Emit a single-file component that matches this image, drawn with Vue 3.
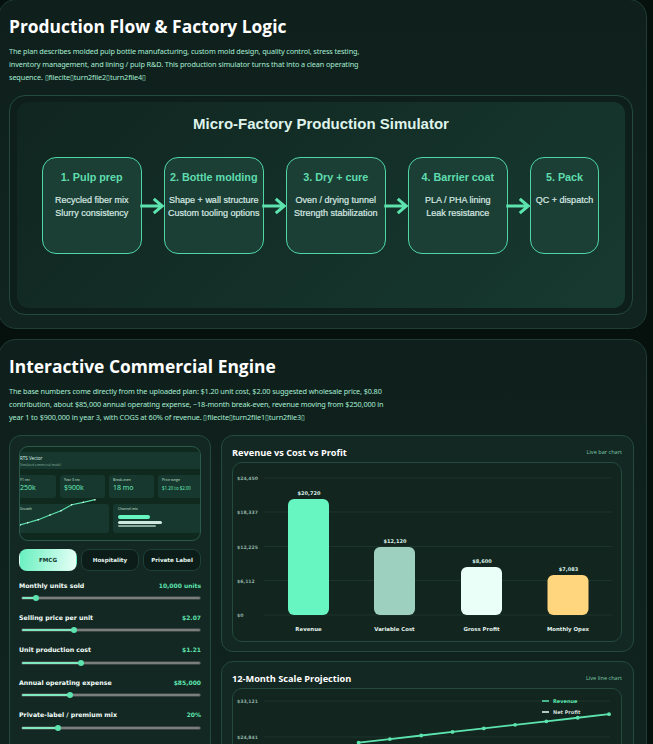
<script setup>
const steps = [
  { title: '1. Pulp prep', lines: ['Recycled fiber mix', 'Slurry consistency'] },
  { title: '2. Bottle molding', lines: ['Shape + wall structure', 'Custom tooling options'] },
  { title: '3. Dry + cure', lines: ['Oven / drying tunnel', 'Strength stabilization'] },
  { title: '4. Barrier coat', lines: ['PLA / PHA lining', 'Leak resistance'] },
  { title: '5. Pack', lines: ['QC + dispatch'], small: true }
]

const heroStats = [
  { label: 'Y1 rev', value: '250k', lead: true },
  { label: 'Year 3 rev', value: '$900k' },
  { label: 'Break-even', value: '18 mo' },
  { label: 'Price range', value: '$1.20 to $2.00', small: true }
]

const tabs = ['FMCG', 'Hospitality', 'Private Label']

const sliders = [
  { label: 'Monthly units sold', value: '10,000 units', pct: 7.6 },
  { label: 'Selling price per unit', value: '$2.07', pct: 29 },
  { label: 'Unit production cost', value: '$1.21', pct: 33 },
  { label: 'Annual operating expense', value: '$85,000', pct: 27.2 },
  { label: 'Private-label / premium mix', value: '20%', pct: 20.5 }
]

const barGrid = [
  { y: 16, label: '$24,450' },
  { y: 50, label: '$18,337' },
  { y: 84.5, label: '$12,225' },
  { y: 118.5, label: '$6,112' },
  { y: 153, label: '$0' }
]
const bars = [
  { x: 56, top: 37, label: 'Revenue', value: '$20,720', color: '#67f5c1' },
  { x: 142, top: 85, label: 'Variable Cost', value: '$12,120', color: '#9dd0bf' },
  { x: 229, top: 105, label: 'Gross Profit', value: '$8,600', color: '#eafff8' },
  { x: 315.5, top: 113, label: 'Monthly Opex', value: '$7,083', color: '#ffd67d' }
]

const lineGrid = [
  { y: 13, label: '$33,121' },
  { y: 49, label: '$24,841' }
]
const linePoints = Array.from({ length: 9 }, (_, i) => ({
  x: 377 - 31.3 * (8 - i),
  y: 26.2 + 3.55 * (8 - i)
}))
const linePath = linePoints.map(p => `${p.x},${p.y}`).join(' ')

const heroLine = [[9, 21], [16.7, 18.7], [27.3, 15.7], [39, 11], [50, 6.7], [60.7, 0.7], [72.3, -1.7], [84, -4.3]]
const heroPath = heroLine.map(p => p.join(',')).join(' ')
</script>

<template>
  <main class="page">
    <section class="panel flow-panel">
      <h2>Production Flow &amp; Factory Logic</h2>
      <p class="lead">
        The plan describes molded pulp bottle manufacturing, custom mold design, quality control, stress testing,<br />
        inventory management, and lining / pulp R&amp;D. This production simulator turns that into a clean operating<br />
        sequence. ▯filecite▯turn2file2▯turn2file4▯
      </p>
      <div class="sim-frame">
        <div class="sim">
          <h3>Micro-Factory Production Simulator</h3>
          <div class="flow">
            <template v-for="(s, i) in steps" :key="s.title">
              <div class="step" :class="{ 'step-small': s.small }">
                <h4>{{ s.title }}</h4>
                <div v-for="l in s.lines" :key="l" class="step-line">{{ l }}</div>
              </div>
              <svg v-if="i < steps.length - 1" class="arrow" width="22" height="18" viewBox="0 0 22 18">
                <path d="M-2 9H20M11.5 1.8L20 9L11.5 16.2" fill="none" stroke="#5ce3ae" stroke-width="3" />
              </svg>
            </template>
          </div>
        </div>
      </div>
    </section>

    <section class="panel engine-panel">
      <h2>Interactive Commercial Engine</h2>
      <p class="lead">
        The base numbers come directly from the uploaded plan: $1.20 unit cost, $2.00 suggested wholesale price, $0.80<br />
        contribution, about $85,000 annual operating expense, ~18-month break-even, revenue moving from $250,000 in<br />
        year 1 to $900,000 in year 3, with COGS at 60% of revenue. ▯filecite▯turn2file1▯turn2file3▯
      </p>

      <div class="engine">
        <aside class="card controls">
          <div class="hero">
            <div class="hero-head">
              <div class="hero-title">RTS Vector</div>
              <div class="hero-sub">Simulated commercial model</div>
            </div>
            <div class="hero-stats">
              <div v-for="s in heroStats" :key="s.label" class="hero-stat" :class="{ 'hero-stat-lead': s.lead }">
                <div class="hero-label">{{ s.label }}</div>
                <div class="hero-value" :class="{ 'hero-value-small': s.small }">{{ s.value }}</div>
              </div>
            </div>
            <div class="hero-lower">
              <div class="hero-box hero-line">
                <div class="hero-label">Growth</div>
                <svg class="hero-svg" width="98" height="29" viewBox="0 0 98 29">
                  <polyline :points="heroPath" fill="none" stroke="#5ce3ae" stroke-width="1.2" />
                  <circle v-for="(p, i) in heroLine" :key="i" :cx="p[0]" :cy="p[1]" r="0.8" fill="#eafff8" />
                </svg>
              </div>
              <div class="hero-box hero-bars">
                <div class="hero-label">Channel mix</div>
                <span class="hb hb1"></span>
                <span class="hb hb2"></span>
                <span class="hb hb3"></span>
              </div>
            </div>
          </div>

          <div class="tabs">
            <button v-for="(t, i) in tabs" :key="t" class="tab" :class="{ active: i === 0 }">{{ t }}</button>
          </div>

          <div class="sliders">
            <div v-for="s in sliders" :key="s.label" class="slider">
              <div class="slider-head">
                <span class="slider-label">{{ s.label }}</span>
                <span class="slider-value">{{ s.value }}</span>
              </div>
              <div class="track">
                <div class="fill" :style="{ width: s.pct + '%' }"></div>
                <div class="thumb" :style="{ left: s.pct + '%' }"></div>
              </div>
            </div>
          </div>
        </aside>

        <div class="charts">
          <article class="card chart-card">
            <header class="chart-head">
              <h5>Revenue vs Cost vs Profit</h5>
              <span>Live bar chart</span>
            </header>
            <div class="chart-box bar-box">
              <svg width="390" height="180" viewBox="0 0 390 180">
                <g v-for="g in barGrid" :key="g.label">
                  <line x1="32" x2="380" :y1="g.y" :y2="g.y" class="grid" />
                  <text x="5" :y="g.y + 2" class="axis">{{ g.label }}</text>
                </g>
                <g v-for="b in bars" :key="b.label">
                  <rect :x="b.x" :y="b.top" width="41" :height="153 - b.top" rx="6" :fill="b.color" />
                  <text :x="b.x + 21" :y="b.top - 4" text-anchor="middle" class="bar-value">{{ b.value }}</text>
                  <text :x="b.x + 20.5" y="169" text-anchor="middle" class="bar-label">{{ b.label }}</text>
                </g>
              </svg>
            </div>
          </article>

          <article class="card chart-card">
            <header class="chart-head">
              <h5>12-Month Scale Projection</h5>
              <span>Live line chart</span>
            </header>
            <div class="chart-box line-box">
              <svg width="390" height="180" viewBox="0 0 390 180">
                <g v-for="g in lineGrid" :key="g.label">
                  <line x1="32" x2="378" :y1="g.y" :y2="g.y" class="grid" />
                  <text x="5" :y="g.y + 2" class="axis">{{ g.label }}</text>
                </g>
                <polyline :points="linePath" fill="none" stroke="#5ce3ae" stroke-width="1.8" />
                <circle v-for="p in linePoints" :key="p.x" :cx="p.x" :cy="p.y" r="1.9" fill="#5ce3ae" />
                <line x1="310" x2="317" y1="13" y2="13" stroke="#5ce3ae" stroke-width="1.5" />
                <text x="321" y="15" class="legend legend-mint">Revenue</text>
                <line x1="310" x2="317" y1="24" y2="24" stroke="#eafff8" stroke-width="1.5" />
                <text x="321" y="26" class="legend">Net Profit</text>
              </svg>
            </div>
          </article>
        </div>
      </div>
    </section>
  </main>
</template>

<style>
html, body { margin: 0; background: #07120f; overflow: hidden; }
</style>

<style scoped>
.page {
  height: 744px;
  overflow: hidden;
  background: #06110e;
  font-family: "Open Sans", "Noto Sans", sans-serif;
  color: #eafff8;
}
.panel {
  box-sizing: border-box;
  margin: 0 6px 10px -2px;
  padding: 13px 13px 13px 10px;
  border: 1px solid #1f3d33;
  border-radius: 18px;
  background: linear-gradient(180deg, #0f201c, #11241f);
}
.flow-panel { height: 330px; margin-top: -1px; }
h2 {
  margin: 0;
  font-size: 17.4px;
  line-height: 26px;
  font-weight: 700;
  color: #fff;
}
.lead {
  margin: 6px 0 0;
  font-family: "Noto Sans", "Open Sans", sans-serif;
  font-size: 7.3px;
  letter-spacing: -0.12px;
  line-height: 13px;
  color: #a6ecd2;
}
.sim-frame {
  box-sizing: border-box;
  height: 220px;
  margin-top: 11px;
  padding: 6px 7px;
  border: 1px solid #234a3d;
  border-radius: 16px;
  background: #0e1f1b;
}
.sim {
  height: 100%;
  box-sizing: border-box;
  padding: 12px 0 0 25px;
  border-radius: 12px;
  background: linear-gradient(135deg, #10251f, #173a30);
  font-family: "Liberation Sans", Arial, sans-serif;
}
.sim h3 {
  margin: 0 0 23px -25px;
  text-align: center;
  font-size: 15px;
  line-height: 20px;
  font-weight: 700;
  color: #dff3ea;
}
.flow { display: flex; align-items: center; }
.arrow { flex: none; width: 22.5px; overflow: visible; }
.step {
  box-sizing: border-box;
  flex: none;
  width: 99.5px;
  height: 97px;
  padding-top: 12px;
  border: 1.5px solid #4fd6a5;
  border-radius: 14px;
  background: #1b3f35;
  text-align: center;
}
.step-small { width: 69px; }
.step h4 {
  margin: 0 0 9.5px;
  font-size: 10.8px;
  line-height: 14px;
  font-weight: 700;
  color: #5fdcae;
  white-space: nowrap;
}
.step-line {
  font-size: 9px;
  line-height: 13px;
  color: #d9e9e3;
  white-space: nowrap;
  -webkit-text-stroke: 0.2px #d9e9e3;
}
.engine {
  display: grid;
  grid-template-columns: 202px 1fr;
  gap: 10px;
  margin-top: 11px;
}
.card {
  box-sizing: border-box;
  border: 1px solid #234a3d;
  border-radius: 12px;
  background: #142823;
}
.controls { padding: 10px 9px; height: 400px; }
.hero {
  box-sizing: border-box;
  height: 95px;
  padding-top: 5px;
  border: 1px solid #2a5a4a;
  border-radius: 9px;
  background: #10291f;
  overflow: hidden;
}
.hero-head {
  height: 17px;
  background: #17382e;
}
.hero-title { font-size: 4.5px; line-height: 9px; color: #dff5ec; padding-top: 2px; }
.hero-sub { font-size: 3px; line-height: 4px; color: #8bb5a5; }
.hero-stats { display: flex; gap: 4px; margin: 6px 0 0 -9px; }
.hero-stat {
  flex: none;
  box-sizing: border-box;
  width: 45px;
  height: 23px;
  padding: 2px 0 0 4px;
  border-radius: 3px;
  background: #17382e;
}
.hero-stat-lead { padding-left: 9px; }
.hero-label { font-size: 3.4px; line-height: 6px; color: #cfe6dc; white-space: nowrap; }
.hero-value { font-size: 7px; line-height: 10px; color: #6df0bf; white-space: nowrap; }
.hero-value-small { font-size: 4.4px; }
.hero-lower { display: flex; gap: 4px; margin: 6px 0 0 -9px; }
.hero-box {
  flex: none;
  position: relative;
  box-sizing: border-box;
  width: 98px;
  height: 29px;
  padding: 2px 0 0 9px;
  border-radius: 3px;
  background: #17382e;
}
.hero-bars { padding-left: 5px; }
.hero-svg { position: absolute; left: 0; top: 0; overflow: visible; }
.hb { display: block; border-radius: 2px; }
.hb1 { width: 32px; height: 4px; margin-top: 3px; background: #67f5c1; }
.hb2 { width: 44px; height: 2.5px; margin-top: 2px; background: #cfe8de; }
.hb3 { width: 38px; height: 2px; margin-top: 1.5px; background: #8aa89c; }
.tabs {
  display: grid;
  grid-template-columns: 58px 58px 58px;
  gap: 4px;
  margin-top: 8px;
}
.tab {
  box-sizing: border-box;
  height: 22px;
  padding: 0;
  border: 1px solid #1e4035;
  border-radius: 8px;
  background: #0c1d19;
  color: #e6f7f1;
  font-family: "DejaVu Sans", sans-serif;
  font-size: 5.6px;
  font-weight: 700;
}
.tab.active {
  border-color: transparent;
  background: linear-gradient(100deg, #67f0bf, #e9fff8);
  color: #10352b;
}
.sliders { margin-top: 9px; }
.slider { height: 32.4px; }
.slider-head {
  display: flex;
  justify-content: space-between;
  height: 10px;
  align-items: center;
  font-weight: 700;
  font-family: "DejaVu Sans", sans-serif;
}
.slider-label { color: #f2fffa; font-size: 6.25px; }
.slider-value { color: #5ce3ae; font-size: 6px; }
.track {
  position: relative;
  box-sizing: border-box;
  height: 4px;
  margin: 6px 0 0 2px;
  border: 1px solid #3c4442;
  border-radius: 3px;
  background: #7a7e7d;
}
.fill {
  position: absolute;
  left: 0;
  top: 0;
  height: 2px;
  background: #7fe8bf;
  border-radius: 2px;
}
.thumb {
  position: absolute;
  top: 50%;
  width: 6px;
  height: 6px;
  margin: -3px 0 0 -3px;
  border-radius: 50%;
  background: #5ce3ae;
}
.charts { display: flex; flex-direction: column; gap: 9px; }
.chart-card { padding: 8px 11px 10px 10px; height: 217px; flex: none; }
.chart-head {
  display: flex;
  justify-content: space-between;
  align-items: center;
  height: 16px;
  margin-bottom: 2px;
}
.chart-head h5 {
  margin: 0;
  font-size: 9.2px;
  font-weight: 700;
  color: #fff;
}
.chart-head span { font-size: 5.6px; color: #7cc9a8; }
.chart-box {
  height: 180px;
  border: 1px solid #234a3d;
  border-radius: 10px;
  background: #12251f;
  box-sizing: border-box;
  overflow: hidden;
}
.chart-box svg { display: block; margin: -1px; font-family: "DejaVu Sans", sans-serif; }
.grid { stroke: #1b352c; stroke-width: 1; }
.axis { font-size: 4.6px; fill: #8fb0a4; font-weight: 700; }
.bar-value { font-size: 5px; fill: #d7efe6; font-weight: 700; }
.bar-label { font-size: 5.4px; fill: #e3f2ec; font-weight: 700; }
.legend { font-size: 5px; fill: #cfdcd7; font-weight: 700; }
.legend-mint { fill: #5ce3ae; }
</style>
